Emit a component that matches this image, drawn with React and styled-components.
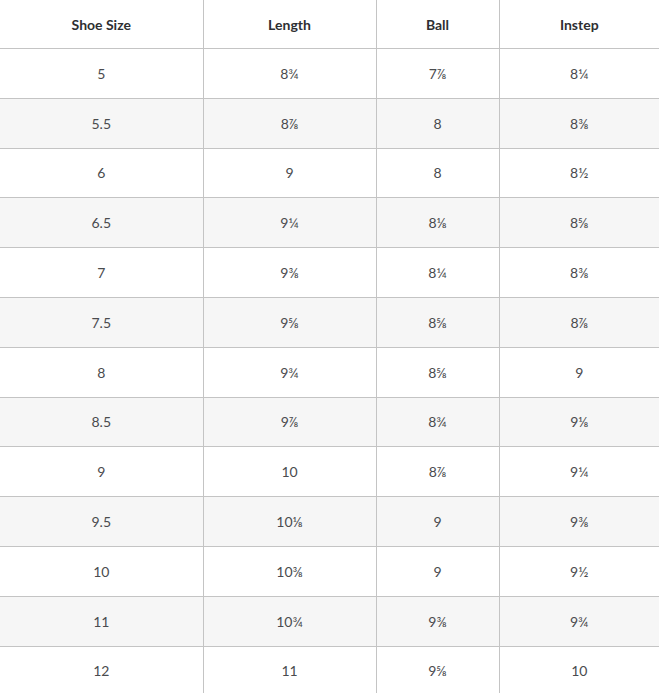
import React from "react";
import styled, { createGlobalStyle } from "styled-components";

const GlobalStyle = createGlobalStyle`
  body {
    margin: 0;
    background: #fff;
    font-family: Lato, "Open Sans", "DejaVu Sans", sans-serif;
  }
`;

const rows = [
  ["5", "8¾", "7⅞", "8¼"],
  ["5.5", "8⅞", "8", "8⅜"],
  ["6", "9", "8", "8½"],
  ["6.5", "9¼", "8⅛", "8⅝"],
  ["7", "9⅜", "8¼", "8⅜"],
  ["7.5", "9⅝", "8⅝", "8⅞"],
  ["8", "9¾", "8⅝", "9"],
  ["8.5", "9⅞", "8¾", "9⅛"],
  ["9", "10", "8⅞", "9¼"],
  ["9.5", "10⅛", "9", "9⅜"],
  ["10", "10⅜", "9", "9½"],
  ["11", "10¾", "9⅜", "9¾"],
  ["12", "11", "9⅝", "10"],
];

const Table = styled.table`
  width: 659px;
  border-collapse: collapse;
  table-layout: fixed;
`;

const Col = styled.col`
  width: ${(p) => p.$w}px;
`;

const HeadCell = styled.th`
  height: 48px;
  padding: 0;
  font-size: 14px;
  font-weight: 700;
  color: #2e2f32;
  text-align: center;
  border-bottom: 1px solid #c4c4c4;
  & + & {
    border-left: 1px solid #c4c4c4;
  }
`;

const Row = styled.tr`
  background: ${(p) => (p.$shaded ? "#f6f6f6" : "#fff")};
`;

const Cell = styled.td`
  height: 48.8px;
  padding: 0;
  font-size: 14px;
  color: #4a4b4e;
  text-align: center;
  border-bottom: 1px solid #c4c4c4;
  & + & {
    border-left: 1px solid #c4c4c4;
  }
`;

export default function App() {
  return (
    <>
      <GlobalStyle />
      <Table>
        <colgroup>
          <Col $w={203} />
          <Col $w={173} />
          <Col $w={123} />
          <Col $w={160} />
        </colgroup>
        <thead>
          <tr>
            <HeadCell>Shoe Size</HeadCell>
            <HeadCell>Length</HeadCell>
            <HeadCell>Ball</HeadCell>
            <HeadCell>Instep</HeadCell>
          </tr>
        </thead>
        <tbody>
          {rows.map((r, i) => (
            <Row key={r[0]} $shaded={i % 2 === 1}>
              {r.map((v, j) => (
                <Cell key={j}>{v}</Cell>
              ))}
            </Row>
          ))}
        </tbody>
      </Table>
    </>
  );
}
